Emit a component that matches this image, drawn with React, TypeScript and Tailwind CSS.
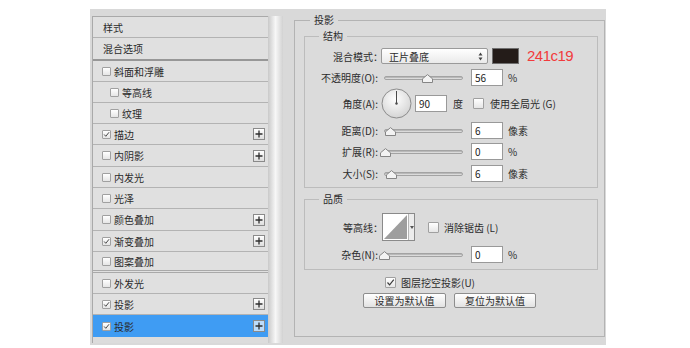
import React from 'react'

type Row = {
  label: string
  h: string
  head?: boolean
  checked?: boolean
  indent?: boolean
  plus?: boolean
  selected?: boolean
  line: string
}

const rows: Row[] = [
  { label: '样式', h: 'h-[21px]', head: true, line: 'border-b border-[#b3b3b3]' },
  { label: '混合选项', h: 'h-[23px]', head: true, line: 'border-b-2 border-[#979797]' },
  { label: '斜面和浮雕', h: 'h-[21px]', line: 'border-b border-[#b3b3b3]' },
  { label: '等高线', h: 'h-[21px]', indent: true, line: 'border-b border-[#b3b3b3]' },
  { label: '纹理', h: 'h-[21px]', indent: true, line: 'border-b border-[#b3b3b3]' },
  { label: '描边', h: 'h-[21px]', checked: true, plus: true, line: 'border-b border-[#b3b3b3]' },
  { label: '内阴影', h: 'h-[22px]', plus: true, line: 'border-b border-[#b3b3b3]' },
  { label: '内发光', h: 'h-[21px]', line: 'border-b border-[#b3b3b3]' },
  { label: '光泽', h: 'h-[21px]', line: 'border-b border-[#b3b3b3]' },
  { label: '颜色叠加', h: 'h-[22px]', plus: true, line: 'border-b border-[#b3b3b3]' },
  { label: '渐变叠加', h: 'h-[21px]', checked: true, plus: true, line: 'border-b border-[#b3b3b3]' },
  { label: '图案叠加', h: 'h-[21px]', line: 'border-b-[3px] border-double border-[#a9a9a9]' },
  { label: '外发光', h: 'h-[21px]', line: 'border-b border-[#b3b3b3]' },
  { label: '投影', h: 'h-[21px]', checked: true, plus: true, line: 'border-b border-[#b3b3b3]' },
  { label: '投影', h: 'h-[22px]', checked: true, plus: true, selected: true, line: '' },
]

function Box({ checked, size = 'w-[9px] h-[9px]' }: { checked?: boolean; size?: string }) {
  return (
    <span className={`${size} shrink-0 border border-[#a0a0a0] rounded-[1px] bg-linear-to-b from-white to-[#e6e6e6] flex items-center justify-center`}>
      {checked && (
        <svg width="9" height="9" viewBox="0 0 9 9">
          <path d="M1.5 4.5 L3.6 6.8 L7.8 1.6" fill="none" stroke="#3a3a3a" strokeWidth="1.2" />
        </svg>
      )}
    </span>
  )
}

function Plus({ selected }: { selected?: boolean }) {
  return (
    <span
      className={`ml-auto mr-[3px] w-[12px] h-[12px] border border-[#8a8a8a] flex items-center justify-center ${
        selected ? 'bg-[#bcdcfb]' : 'bg-linear-to-b from-white to-[#dedede]'
      }`}
    >
      <svg width="8" height="8" viewBox="0 0 8 8">
        <path d="M4 0.5V7.5M0.5 4H7.5" stroke="#2e2e2e" strokeWidth="1.3" />
      </svg>
    </span>
  )
}

function Slider({ thumb }: { thumb: string }) {
  return (
    <div className="relative w-[79px] h-[17px] flex items-center shrink-0">
      <div className="w-full h-[4px] rounded-full border border-[#a3a3a3] bg-linear-to-b from-[#a8a8a8] to-[#ececec]" />
      <svg className={`absolute top-[5px] ${thumb}`} width="11" height="9" viewBox="0 0 11 9">
        <path d="M0.5 8.5V4.8L5.5 0.6L10.5 4.8V8.5Z" fill="#f3f3f3" stroke="#858585" />
      </svg>
    </div>
  )
}

function Field({ v }: { v: string }) {
  return (
    <div className="w-[32px] h-[17px] shrink-0 bg-white border border-[#999] pl-[3px] text-[10px] leading-[15px] text-[#222]">
      {v}
    </div>
  )
}

function Label({ children, w = 'w-[73px]' }: { children: React.ReactNode; w?: string }) {
  return <span className={`${w} shrink-0 text-right whitespace-nowrap`}>{children}</span>
}

function SliderRow({ label, thumb, v, unit, mt }: { label: string; thumb: string; v: string; unit: string; mt: string }) {
  return (
    <div className={`${mt} flex items-center h-[17px]`}>
      <Label>{label}</Label>
      <span className="ml-[6px]">
        <Slider thumb={thumb} />
      </span>
      <span className="ml-[8px]">
        <Field v={v} />
      </span>
      <span className="ml-[5px]">{unit}</span>
    </div>
  )
}

export default function App() {
  return (
    <div className="w-[690px] h-[348px] bg-white pt-[9px] pl-[90px] font-['Noto_Sans_CJK_SC','Noto_Sans',sans-serif] text-[10px] text-[#2b2b2b] overflow-hidden">
      <div className="w-[516px] h-[336px] bg-[#d9d9d9] flex items-start pl-[2px]">
        {/* style list */}
        <div className="mt-[7px] w-[176px] h-[327px] bg-[#dcdcdc] border-l border-t border-[#a9a9a9] flex flex-col">
          {rows.map((r, i) => (
            <div
              key={i}
              className={`${r.h} ${r.line} shrink-0 flex items-center ${
                r.selected ? 'bg-[#3f9cf3]' : 'bg-[#e0e0e0]'
              } ${r.head ? 'pl-[10px]' : r.indent ? 'pl-[17px]' : 'pl-[9px]'}`}
            >
              {!r.head && <Box checked={r.checked} />}
              <span className={r.head ? '' : 'ml-[3px]'}>{r.label}</span>
              {r.plus && <Plus selected={r.selected} />}
            </div>
          ))}
        </div>

        {/* scrollbar */}
        <div className="mt-[7px] w-[15px] h-[327px] bg-linear-to-r from-[#c9c9c9] via-[#f7f7f7] to-[#d2d2d2]" />

        {/* drop shadow panel */}
        <fieldset className="ml-[11px] mt-[4px] w-[311px] h-[324px] border border-[#b3b3b3] bg-[#dbdbdb]">
          <legend className="ml-[15px] px-[4px] leading-[14px]">投影</legend>

          <fieldset className="ml-[9px] mt-[2px] w-[294px] border border-[#bcbcbc] pb-[5px]">
            <legend className="ml-[14px] px-[4px] leading-[14px]">结构</legend>

            <div className="mt-[5px] flex items-center h-[16px]">
              <Label w="w-[78px]">混合模式：</Label>
              <div className="ml-[-2px] w-[107px] h-[16px] border border-[#9a9a9a] rounded-[2px] bg-linear-to-b from-white to-[#eaeaea] flex items-center pl-[7px] pr-[4px]">
                <span>正片叠底</span>
                <svg className="ml-auto" width="5" height="9" viewBox="0 0 5 9">
                  <path d="M2.5 0.5L4.5 3.5H0.5Z M2.5 8.5L4.5 5.5H0.5Z" fill="#444" />
                </svg>
              </div>
              <div className="ml-[4px] w-[27px] h-[16px] bg-[#241c19] border border-[#6f6f6f]" />
              <span className="ml-[8px] font-['Liberation_Sans',sans-serif] text-[15px] tracking-[-0.5px] leading-[16px] text-[#f23a3c]">241c19</span>
            </div>

            <SliderRow label="不透明度(O):" thumb="left-[38px]" v="56" unit="%" mt="mt-[5px]" />

            <div className="mt-[2px] flex items-center h-[31px]">
              <Label>角度(A):</Label>
              <svg className="ml-[3px] shrink-0" width="31" height="31" viewBox="0 0 31 31">
                <defs>
                  <radialGradient id="dial" cx="45%" cy="35%" r="65%">
                    <stop offset="0%" stopColor="#ffffff" />
                    <stop offset="100%" stopColor="#d4d4d4" />
                  </radialGradient>
                </defs>
                <circle cx="15.5" cy="15.5" r="14.5" fill="url(#dial)" stroke="#8c8c8c" />
                <line x1="15.5" y1="15.5" x2="15.5" y2="3" stroke="#4a4a4a" strokeWidth="1" />
                <circle cx="15.5" cy="15.5" r="1.2" fill="#4a4a4a" />
              </svg>
              <span className="ml-[3px]">
                <Field v="90" />
              </span>
              <span className="ml-[6px]">度</span>
              <span className="ml-[10px]">
                <Box size="w-[11px] h-[11px]" />
              </span>
              <span className="ml-[6px]">使用全局光 (G)</span>
            </div>

            <SliderRow label="距离(D):" thumb="left-[1px]" v="6" unit="像素" mt="mt-[3px]" />
            <SliderRow label="扩展(R):" thumb="left-[-4px]" v="0" unit="%" mt="mt-[4px]" />
            <SliderRow label="大小(S):" thumb="left-[2px]" v="6" unit="像素" mt="mt-[5px]" />
          </fieldset>

          <fieldset className="ml-[9px] mt-[4px] w-[294px] border border-[#bcbcbc] pb-[6px]">
            <legend className="ml-[14px] px-[4px] leading-[14px]">品质</legend>

            <div className="mt-[7px] flex items-center h-[28px]">
              <Label w="w-[78px]">等高线：</Label>
              <div className="ml-[-1px] w-[33px] h-[28px] border border-[#8a8a8a] bg-white flex">
                <svg width="25" height="26" viewBox="0 0 25 26" className="shrink-0">
                  <path d="M1 25 L24 1 V25 Z" fill="#9e9e9e" />
                </svg>
                <div className="flex-1 border-l border-[#b5b5b5] bg-[#ececec] flex items-center justify-center">
                  <svg width="4" height="3" viewBox="0 0 4 3">
                    <path d="M0 0H4L2 3Z" fill="#555" />
                  </svg>
                </div>
              </div>
              <span className="ml-[13px]">
                <Box size="w-[11px] h-[11px]" />
              </span>
              <span className="ml-[5px]">消除锯齿 (L)</span>
            </div>

            <SliderRow label="杂色(N):" thumb="left-[-5px]" v="0" unit="%" mt="mt-[5px]" />
          </fieldset>

          <div className="mt-[6px] ml-[90px] flex items-center h-[12px]">
            <Box checked size="w-[11px] h-[11px]" />
            <span className="ml-[5px]">图层挖空投影(U)</span>
          </div>

          <div className="mt-[5px] flex justify-center gap-[8px]">
            <button className="w-[83px] h-[15px] border border-[#8d8d8d] rounded-[2px] bg-linear-to-b from-white to-[#e2e2e2] text-[10px] leading-[13px]">
              设置为默认值
            </button>
            <button className="w-[82px] h-[15px] border border-[#8d8d8d] rounded-[2px] bg-linear-to-b from-white to-[#e2e2e2] text-[10px] leading-[13px]">
              复位为默认值
            </button>
          </div>
        </fieldset>
      </div>
    </div>
  )
}
